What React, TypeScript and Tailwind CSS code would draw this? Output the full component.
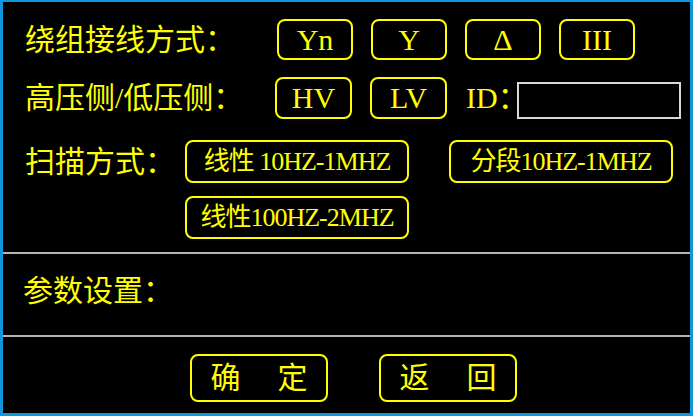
import React from 'react';

const font = "font-['Liberation_Serif','Noto_Sans_CJK_SC',serif]";

function Btn({ children, className = '' }: { children: React.ReactNode; className?: string }) {
  return (
    <div
      className={`flex items-center justify-center border-2 border-[#ffff00] rounded-[8px] text-[#ffff00] leading-none ${className}`}
    >
      {children}
    </div>
  );
}

export default function App() {
  const wiring = ['Yn', 'Y', 'Δ', 'III'];
  return (
    <div className={`w-[693px] h-[416px] bg-black border-[3px] border-t-2 border-[#1296db] flex flex-col text-[#ffff00] ${font}`}>
      {/* upper settings */}
      <div className="h-[250px] pl-[22px] pt-[17px]">
        <div className="flex items-center h-[41px]">
          <div className="w-[252px] text-[30px] leading-none">绕组接线方式：</div>
          <div className="flex gap-[18px]">
            {wiring.map((w) => (
              <Btn key={w} className="w-[76px] h-[41px] text-[30px]">
                {w}
              </Btn>
            ))}
          </div>
        </div>

        <div className="flex items-center h-[42px] mt-[17px]">
          <div className="w-[250px] text-[30px] leading-none">高压侧/低压侧：</div>
          <Btn className="w-[77px] h-[42px] text-[30px]">HV</Btn>
          <Btn className="w-[77px] h-[42px] text-[30px] ml-[18px]">LV</Btn>
          <div className="ml-[19px] text-[30px] leading-none">ID：</div>
          <div className="ml-[-11px] mt-[5px] w-[164px] h-[37px] border-2 border-[#d8d8d8] bg-black" />
        </div>

        <div className="flex mt-[21px]">
          <div className="w-[160px] h-[43px] flex items-center text-[30px] leading-none">扫描方式：</div>
          <div className="grid grid-cols-[224px_224px] gap-x-[40px] gap-y-[13px]">
            <Btn className="h-[43px] text-[26px] tracking-[-1px]">线性&nbsp;10HZ-1MHZ</Btn>
            <Btn className="h-[43px] text-[26px] tracking-[-1px]">分段10HZ-1MHZ</Btn>
            <Btn className="h-[43px] text-[26px] tracking-[-1px]">线性100HZ-2MHZ</Btn>
          </div>
        </div>
      </div>

      <div className="h-[2px] bg-[#b4b4b4]" />

      {/* parameters */}
      <div className="h-[81px] pl-[20px] pt-[22px]">
        <div className="text-[30px] leading-none">参数设置：</div>
      </div>

      <div className="h-[2px] bg-[#b4b4b4]" />

      {/* actions */}
      <div className="flex-1 flex pl-[187px] pt-[17px] gap-[51px]">
        <Btn className="w-[138px] h-[48px] text-[30px] gap-[37px]">
          <span>确</span>
          <span>定</span>
        </Btn>
        <Btn className="w-[138px] h-[48px] text-[30px] gap-[37px]">
          <span>返</span>
          <span>回</span>
        </Btn>
      </div>
    </div>
  );
}
